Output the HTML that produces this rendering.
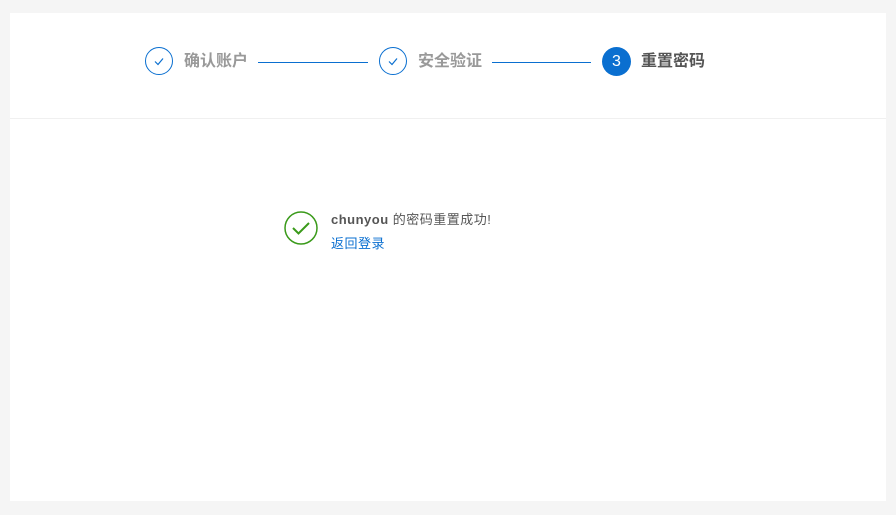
<!DOCTYPE html>
<html><head><meta charset="utf-8"><style>
body{margin:0;background:#f5f5f5;width:896px;height:515px;position:relative;font-family:"Liberation Sans","Noto Sans CJK SC",sans-serif;}
.card{position:absolute;left:10px;top:13px;width:876px;height:488px;background:#fff;}
.hr{position:absolute;left:10px;top:118px;width:876px;height:1px;background:#f0f0f0;}
.c{position:absolute;top:46px;width:28px;height:28px;border:1px solid #0a6fd0;border-radius:50%;box-sizing:border-box;}
.lbl{position:absolute;top:52px;font-size:16px;font-weight:bold;color:#999;line-height:20px;}
.line{position:absolute;top:62px;height:1px;background:#0a6fd0;}
</style></head><body>
<div class="card"></div>
<div class="hr"></div>
<div class="c" style="left:145px;top:47px"><svg width="28" height="28" style="position:absolute;left:-1px;top:-1px"><path d="M10 14.5l3 3 5-6" fill="none" stroke="#0a6fd0" stroke-width="1.2"/></svg></div>
<div class="lbl" style="left:184px">确认账户</div>
<div class="line" style="left:258px;width:110px"></div>
<div class="c" style="left:379px;top:47px"><svg width="28" height="28" style="position:absolute;left:-1px;top:-1px"><path d="M10 14.5l3 3 5-6" fill="none" stroke="#0a6fd0" stroke-width="1.2"/></svg></div>
<div class="lbl" style="left:418px">安全验证</div>
<div class="line" style="left:492px;width:99px"></div>
<div style="position:absolute;left:602px;top:47px;width:29px;height:29px;border-radius:50%;background:#0a6fd0;color:#fff;font-size:16px;text-align:center;line-height:29px">3</div>
<div class="lbl" style="left:641px;color:#555">重置密码</div>
<svg style="position:absolute;left:284px;top:211px" width="34" height="34"><circle cx="17" cy="17" r="16" fill="none" stroke="#3a9a1a" stroke-width="1.5"/><path d="M9 17l5.5 5.5L25 12" fill="none" stroke="#3a9a1a" stroke-width="2"/></svg>
<div style="position:absolute;left:331px;top:211px;font-size:13px;color:#555;line-height:18px;letter-spacing:0.5px"><b>chunyou</b> 的密码重置成功!</div>
<div style="position:absolute;left:331px;top:235px;font-size:13px;color:#0a6fd0;line-height:18px;letter-spacing:0.5px">返回登录</div>
</body></html>
